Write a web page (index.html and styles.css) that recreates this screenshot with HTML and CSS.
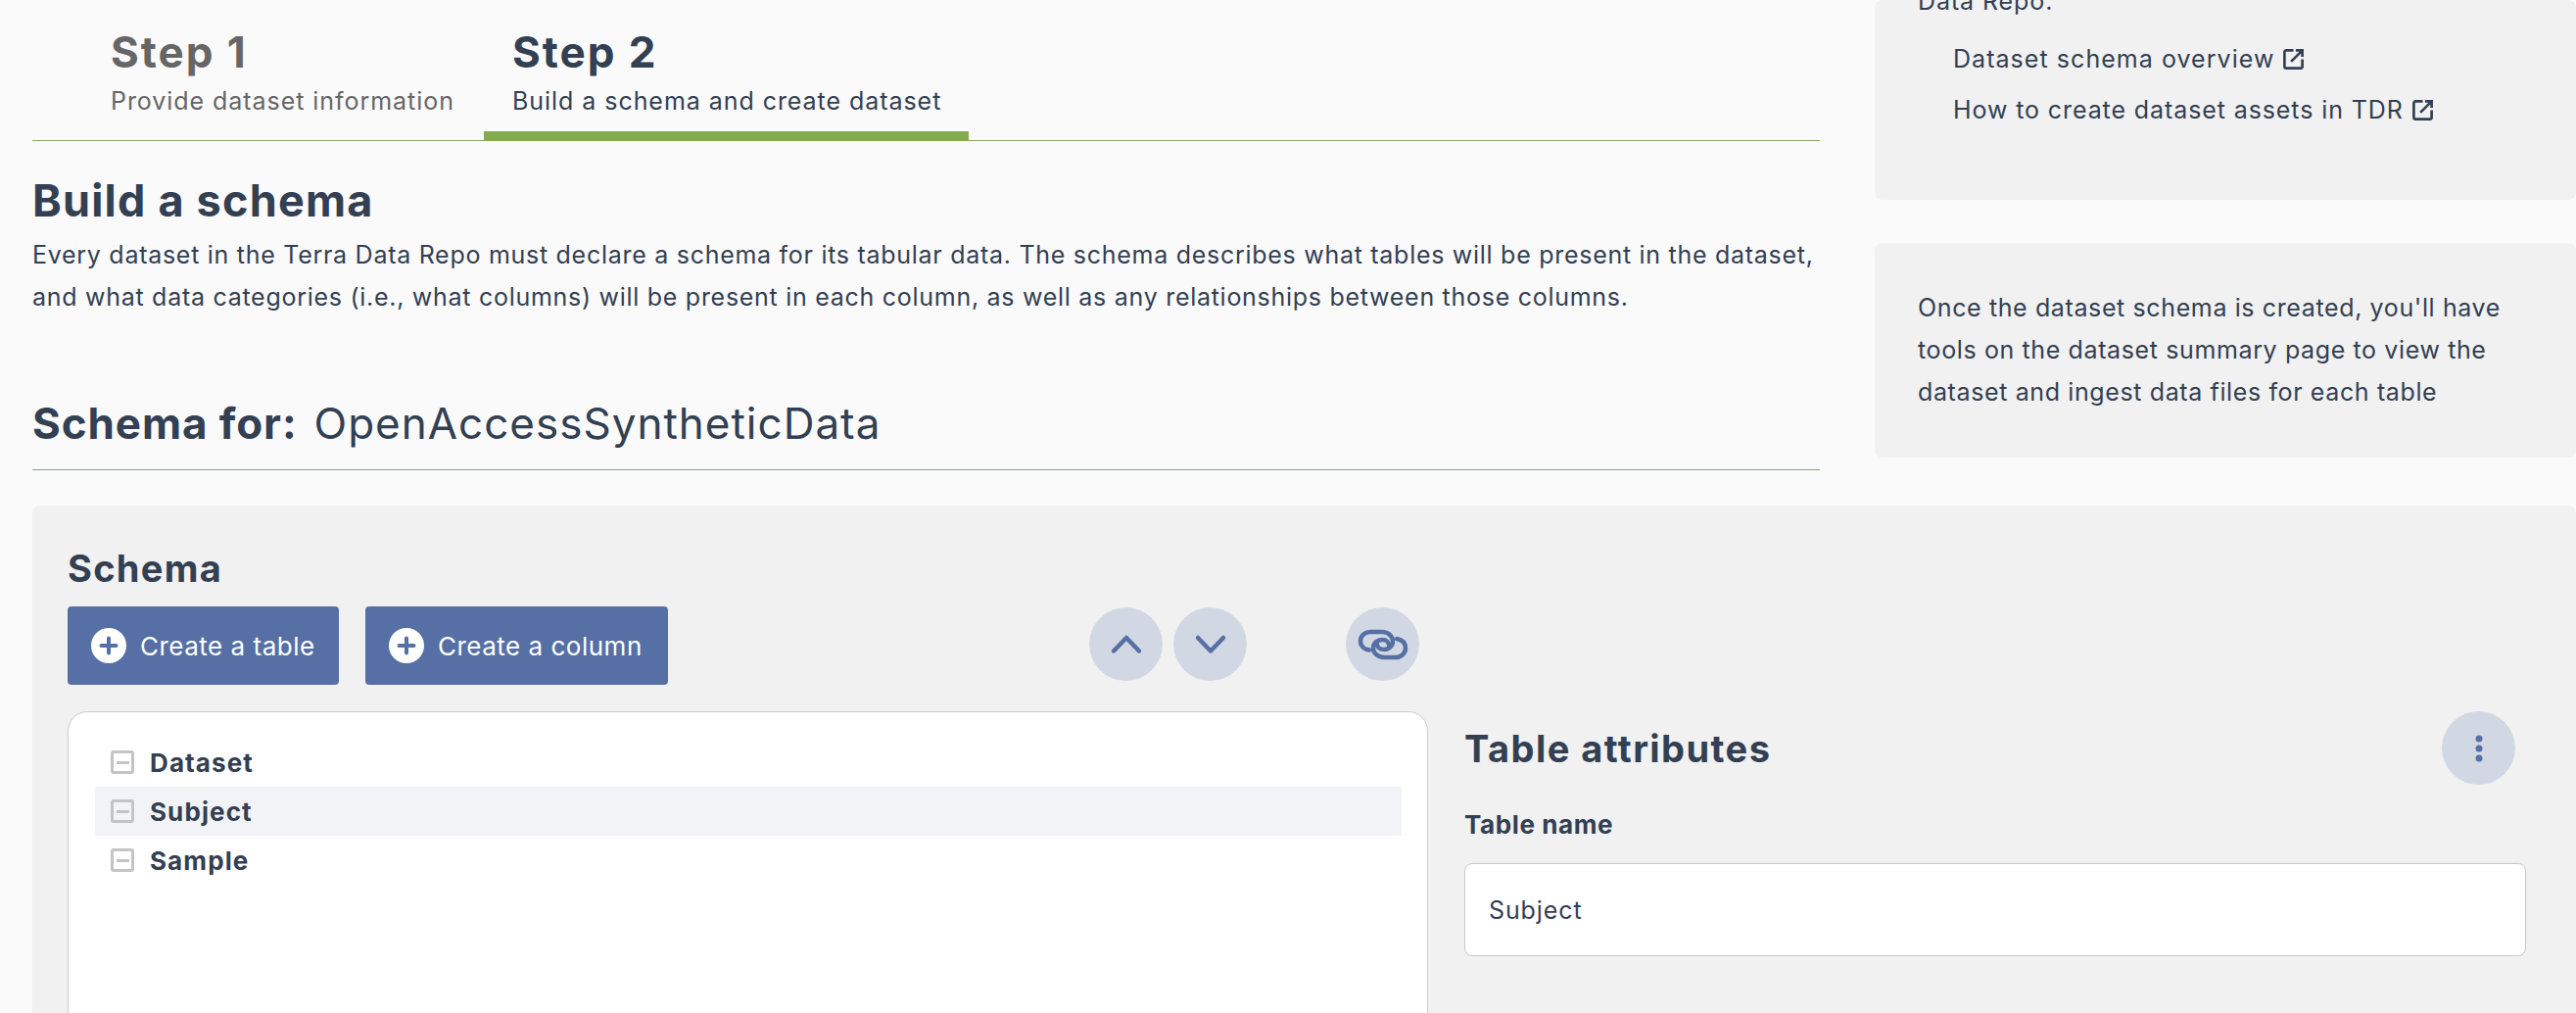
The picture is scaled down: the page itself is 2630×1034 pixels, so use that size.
FILE: index.html
```html
<!DOCTYPE html>
<html lang="en">
<head>
<meta charset="utf-8">
<title>Build a schema</title>
<link rel="stylesheet" href="styles.css">
</head>
<body>
<div class="page">
  <div class="top">
    <main class="main">
      <nav class="steps">
        <div class="step step-1">
          <div class="step-title">Step 1</div>
          <div class="step-sub">Provide dataset information</div>
        </div>
        <div class="step step-2">
          <div class="step-title">Step 2</div>
          <div class="step-sub">Build a schema and create dataset</div>
        </div>
      </nav>
      <h1 class="build">Build a schema</h1>
      <p class="intro">Every dataset in the Terra Data Repo must declare a schema for its tabular data. The schema describes what tables will be present in the dataset,<br>and what data categories (i.e., what columns) will be present in each column, as well as any relationships between those columns.</p>
      <h2 class="schema-for"><span class="for-label">Schema for:</span><span class="for-name">OpenAccessSyntheticData</span></h2>
    </main>
    <aside class="side">
      <section class="note note-links">
        <p class="note-text">Data Repo.</p>
        <a class="link link-a">Dataset schema overview<svg class="ext" viewBox="0 0 24 24"><path d="M12 2.500H4.500A2 2 0 0 0 2.500 4.500V19.500A2 2 0 0 0 4.500 21.500H19.500A2 2 0 0 0 21.500 19.500V12M9.500 14.500 20.500 3.500M14.500 2.500H21.500V9.500"/></svg></a>
        <a class="link link-b">How to create dataset assets in TDR<svg class="ext" viewBox="0 0 24 24"><path d="M12 2.500H4.500A2 2 0 0 0 2.500 4.500V19.500A2 2 0 0 0 4.500 21.500H19.500A2 2 0 0 0 21.500 19.500V12M9.500 14.500 20.500 3.500M14.500 2.500H21.500V9.500"/></svg></a>
      </section>
      <section class="note note-once">
        <p class="note-para">Once the dataset schema is created, you'll have<br>tools on the dataset summary page to view the<br>dataset and ingest data files for each table</p>
      </section>
    </aside>
  </div>
  <section class="schema">
    <h2 class="schema-title">Schema</h2>
    <div class="toolbar">
      <button class="btn btn-table"><svg class="plus" viewBox="0 0 36 36"><circle cx="18" cy="18" r="18" fill="#fff"/><path d="M18 10.500V25.500M10.500 18H25.500"/></svg><span class="btn-label">Create a table</span></button>
      <button class="btn btn-column"><svg class="plus" viewBox="0 0 36 36"><circle cx="18" cy="18" r="18" fill="#fff"/><path d="M18 10.500V25.500M10.500 18H25.500"/></svg><span class="btn-label">Create a column</span></button>
      <div class="arrows">
        <span class="round"><svg class="glyph" viewBox="0 0 36 36"><path d="M5 24.500 18 11 31 24.500"/></svg></span>
        <span class="round"><svg class="glyph" viewBox="0 0 36 36"><path d="M5 11 18 24.500 31 11"/></svg></span>
      </div>
      <span class="round round-link"><svg class="glyph-link" viewBox="0 0 52 32"><path d="M12 21.500C7.500 21 3 18 3 12.500C3 6.500 8 3 13 3H25C32 3 36 8 36 12.500C36 18 31.500 21 27 21C22 21 20 18 20 15.500"/><path d="M40 10C45 11 49 14 49 19.500C49 25.500 44 29 39 29H27C20 29 16 24 16 19.500C16 14 20.500 11 25 11C30 11 32 14 32 16.500"/></svg></span>
    </div>
    <div class="workspace">
      <div class="tree">
        <div class="tree-row"><span class="box"></span><span class="tree-label">Dataset</span></div>
        <div class="tree-row selected"><span class="box"></span><span class="tree-label">Subject</span></div>
        <div class="tree-row"><span class="box"></span><span class="tree-label">Sample</span></div>
      </div>
      <div class="attrs">
        <div class="attrs-head">
          <h3 class="attrs-title">Table attributes</h3>
          <span class="round"><svg class="dots" viewBox="0 0 8 28"><circle cx="4" cy="4" r="3.500"/><circle cx="4" cy="14" r="3.500"/><circle cx="4" cy="24" r="3.500"/></svg></span>
        </div>
        <label class="field-label">Table name</label>
        <div class="input"><span class="input-text">Subject</span></div>
      </div>
    </div>
  </section>
</div>
</body>
</html>
```
FILE: styles.css
```css
* { box-sizing: border-box; }
html, body { margin: 0; height: 100%; overflow: hidden; }
body { background: #fafafa; color: #333f52; font-family: Inter, "Liberation Sans", sans-serif; }
h1, h2, h3, p { margin: 0; }
.page { width: 2630px; height: 1034px; overflow: hidden; padding-left: 33px; }
.top { display: flex; gap: 56px; height: 516px; }
.main { width: 1825px; flex: none; }
.steps { height: 144px; display: flex; border-bottom: 1px solid #87a765; padding-left: 48px; }
.step { padding: 30px 32px 0 32px; border-bottom: 10px solid transparent; margin-bottom: -1px; height: 144px; }
.step-1 { width: 413px; color: #666; }
.step-2 { width: 495px; padding-left: 29px; border-bottom-color: #83ab52; }
.step-title { font-size: 44px; line-height: 46px; font-weight: 700; letter-spacing: 2px; }
.step-sub { font-size: 25px; line-height: 30px; margin-top: 12px; white-space: nowrap; letter-spacing: 0.950px; }
.build { font-size: 45px; line-height: 50px; font-weight: 700; margin-top: 36px; letter-spacing: 1.200px; }
.intro { font-size: 25px; line-height: 43px; margin-top: 9px; letter-spacing: 0.720px; white-space: nowrap; }
.schema-for { margin-top: 82px; height: 73px; border-bottom: 1px solid #87a765; display: flex; align-items: baseline; gap: 17px; line-height: 50px; }
.for-label { font-size: 44px; font-weight: 700; letter-spacing: 0.900px; }
.for-name { font-size: 44px; font-weight: 400; letter-spacing: 1px; }
.side { flex: 1; display: flex; flex-direction: column; gap: 44px; min-width: 0; }
.note { background: #f1f1f1; border-radius: 8px; padding-left: 44px; }
.note-links { height: 204px; display: flex; flex-direction: column; }
.note-text { font-size: 25px; line-height: 30px; margin-top: -14px; letter-spacing: 0.900px; }
.link { display: flex; align-items: center; height: 52px; padding-left: 36px; font-size: 25px; }
.link-a { margin-top: 18px; letter-spacing: 1.050px; }
.link-b { letter-spacing: 0.900px; }
.ext { width: 23px; height: 23px; margin-left: 8px; fill: none; stroke: #333f52; stroke-width: 2.800; }
.note-once { height: 219px; padding-top: 45px; }
.note-para { font-size: 25px; line-height: 43px; letter-spacing: 0.620px; white-space: nowrap; }
.schema { background: #f1f1f1; border-radius: 8px; height: 560px; padding: 42px 36px 0 36px; }
.schema-title { font-size: 38px; line-height: 44px; font-weight: 700; letter-spacing: 1.300px; }
.toolbar { display: flex; align-items: center; margin-top: 17px; height: 80px; }
.btn { height: 80px; border: 0; border-radius: 4px; background: #5670a5; color: #fff; display: flex; align-items: center; padding: 0 0 0 24px; font: inherit; font-size: 26px; margin-right: 27px; }
.btn-table { width: 277px; }
.btn-column { width: 309px; }
.plus { width: 36px; height: 36px; flex: none; }
.plus path { stroke: #5670a5; stroke-width: 4; stroke-linecap: round; fill: none; }
.btn-label { margin-left: 14px; white-space: nowrap; letter-spacing: 0.500px; }
.arrows { display: flex; gap: 11px; margin-left: 403px; margin-right: 101px; margin-bottom: 3px; }
.round { width: 75px; height: 75px; border-radius: 50%; background: #d2d8e3; display: flex; align-items: center; justify-content: center; flex: none; }
.round-link { margin-bottom: 3px; }
.glyph { width: 36px; height: 36px; fill: none; stroke: #5670a5; stroke-width: 4.500; stroke-linecap: round; stroke-linejoin: round; }
.glyph-link { width: 52px; height: 32px; fill: none; stroke: #5670a5; stroke-width: 4.500; stroke-linecap: round; stroke-linejoin: round; }
.workspace { display: flex; gap: 37px; margin-top: 27px; }
.tree { width: 1389px; height: 400px; flex: none; background: #fff; border: 1.500px solid #ccc; border-radius: 20px; padding: 26px 26px 0 27px; }
.tree-row { height: 50px; display: flex; align-items: center; padding-left: 16px; gap: 16px; }
.tree-row.selected { background: #f2f3f7; }
.box { width: 24px; height: 24px; border: 3px solid #c4c4c4; border-radius: 3px; flex: none; display: flex; align-items: center; justify-content: center; }
.box::before { content: ""; width: 13px; height: 3px; background: #c4c4c4; }
.tree-label { font-size: 26px; font-weight: 700; letter-spacing: 1.100px; }
.attrs { width: 1084px; flex: none; }
.attrs-head { display: flex; align-items: center; justify-content: space-between; padding-right: 11px; }
.attrs-title { font-size: 38px; font-weight: 700; letter-spacing: 1.450px; }
.dots { width: 8px; height: 28px; fill: #5670a5; }
.field-label { display: block; font-size: 26px; line-height: 30px; font-weight: 700; margin-top: 26px; letter-spacing: 0.600px; }
.input { margin-top: 24px; height: 95px; background: #fff; border: 1.500px solid #c8c8c8; border-radius: 8px; display: flex; align-items: center; padding-left: 24px; }
.input-text { font-size: 25px; letter-spacing: 0.900px; }
```
